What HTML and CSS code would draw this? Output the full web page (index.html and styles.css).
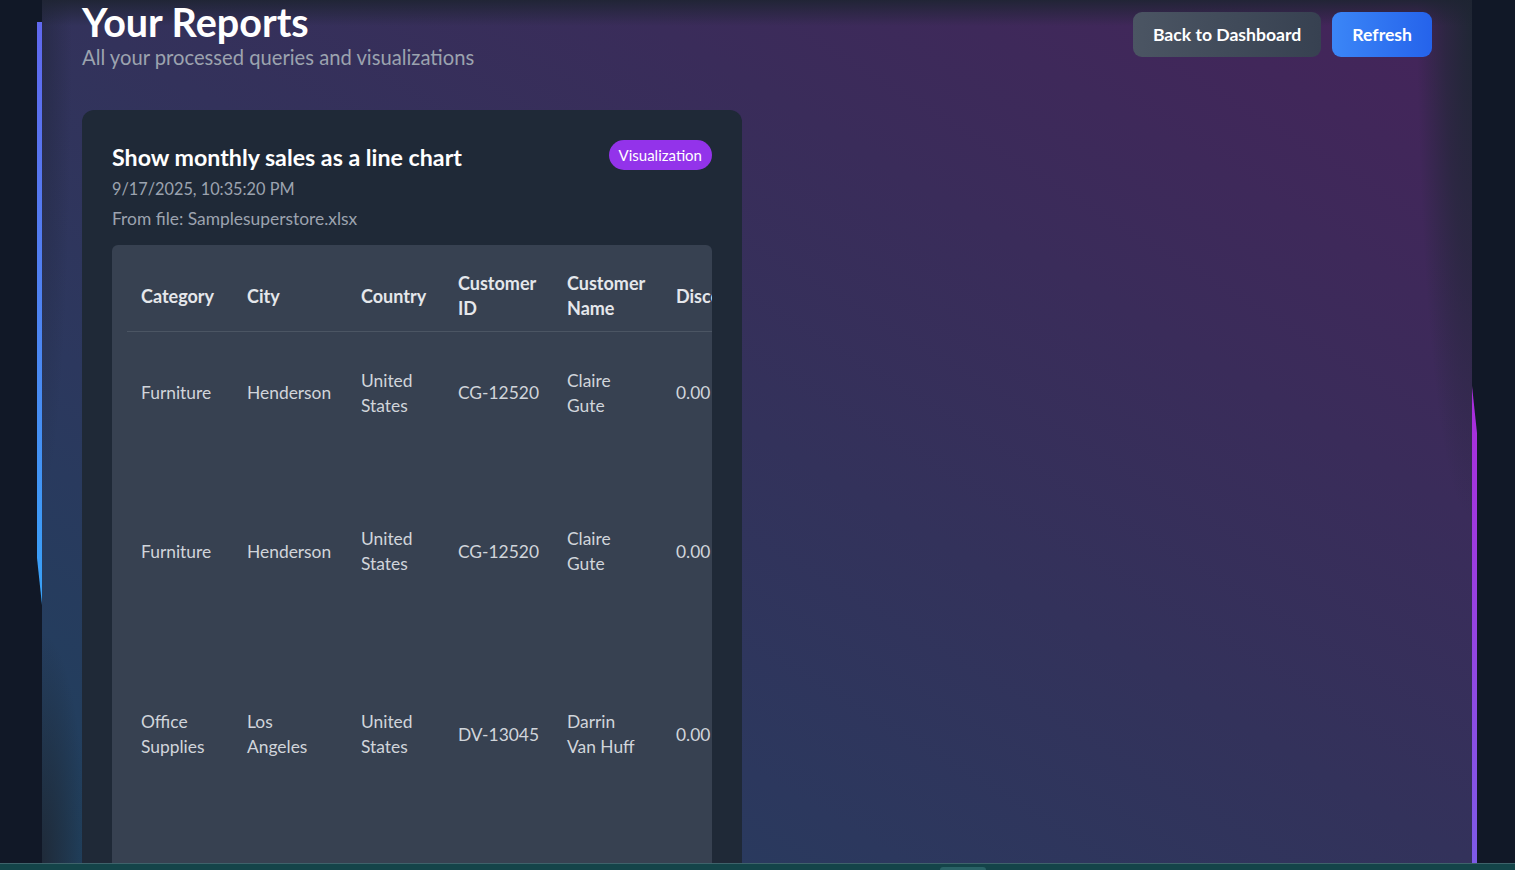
FILE: index.html
```html
<!DOCTYPE html>
<html lang="en">
<head>
<meta charset="utf-8">
<title>Your Reports</title>
<link rel="stylesheet" href="styles.css">
</head>
<body>
  <div class="stage">
    <div class="edge edge-left"></div>
    <div class="edge edge-right"></div>
    <main class="frame">
      <header class="page-head">
        <div class="page-titles">
          <h1 class="page-title">Your Reports</h1>
          <p class="page-sub">All your processed queries and visualizations</p>
        </div>
        <div class="page-actions">
          <button class="btn btn-gray">Back to Dashboard</button>
          <button class="btn btn-blue">Refresh</button>
        </div>
      </header>

      <section class="report-card">
        <div class="card-head">
          <div class="card-info">
            <h2 class="card-title">Show monthly sales as a line chart</h2>
            <p class="card-date">9/17/2025, 10:35:20 PM</p>
            <p class="card-file">From file: Samplesuperstore.xlsx</p>
          </div>
          <span class="badge">Visualization</span>
        </div>

        <div class="table-wrap">
          <table class="data-table">
            <thead>
              <tr>
                <th class="c1">Category</th>
                <th class="c2">City</th>
                <th class="c3">Country</th>
                <th class="c4">Customer<br>ID</th>
                <th class="c5">Customer<br>Name</th>
                <th class="c6">Discount</th>
              </tr>
            </thead>
            <tbody>
              <tr class="row-1">
                <td>Furniture</td>
                <td>Henderson</td>
                <td>United<br>States</td>
                <td class="nowrap">CG-12520</td>
                <td>Claire<br>Gute</td>
                <td>0.00</td>
              </tr>
              <tr class="row-2">
                <td>Furniture</td>
                <td>Henderson</td>
                <td>United<br>States</td>
                <td class="nowrap">CG-12520</td>
                <td>Claire<br>Gute</td>
                <td>0.00</td>
              </tr>
              <tr class="row-3">
                <td>Office<br>Supplies</td>
                <td>Los<br>Angeles</td>
                <td>United<br>States</td>
                <td class="nowrap">DV-13045</td>
                <td>Darrin<br>Van Huff</td>
                <td>0.00</td>
              </tr>
            </tbody>
          </table>
        </div>
      </section>
    </main>
  </div>
  <div class="taskbar"><span class="taskbar-pill"></span></div>
</body>
</html>
```
FILE: styles.css
```css
* { box-sizing: border-box; }

html, body {
  margin: 0;
  padding: 0;
  height: 870px;
  overflow: hidden;
  background: #111827;
  font-family: Lato, "Noto Sans", "Liberation Sans", sans-serif;
}

.stage {
  position: relative;
  width: 1430px;
  height: 863px;
  margin-left: 42px;
}

.frame {
  height: 863px;
  overflow: hidden;
  padding: 0 40px;
  background:
    linear-gradient(to bottom, rgba(30, 36, 50, 0.9) 0px, rgba(30, 36, 50, 0) 26px),
    radial-gradient(55px 520px at 100% 0%, rgba(31, 39, 52, 1) 0%, rgba(31, 39, 52, 0.6) 50%, rgba(31, 39, 52, 0) 100%),
    radial-gradient(45px 230px at 0% 100%, rgba(31, 41, 55, 0.95) 0%, rgba(31, 41, 55, 0.5) 50%, rgba(31, 41, 55, 0) 100%),
    radial-gradient(30px 500px at 0% 0%, rgba(30, 36, 55, 0.5), rgba(30, 36, 55, 0)),
    linear-gradient(to bottom left, #45245a 0%, #3a2c5a 30%, #33325b 50%, #2c385e 70%, #1f415e 100%);
}

.edge {
  position: absolute;
  width: 5px;
}

.edge-left {
  left: -5px;
  top: 22px;
  height: 583px;
  background: linear-gradient(to bottom, #6068ee 0%, #4c86f2 55%, #38a2f8 100%);
  clip-path: polygon(0 0, 100% 0, 100% 100%, 0 calc(100% - 47px));
}

.edge-right {
  right: -5px;
  top: 386px;
  height: 477px;
  background: linear-gradient(to bottom, #ab2bdc 0%, #9a3ee0 40%, #7d5ae7 100%);
  clip-path: polygon(0 0, 100% 47px, 100% 100%, 0 100%);
}

/* header */
.page-head {
  display: flex;
  justify-content: space-between;
  align-items: center;
}

.page-title {
  margin: 0;
  font-size: 39.5px;
  line-height: 44px;
  font-weight: 700;
  color: #ffffff;
}

.page-sub {
  margin: 1px 0 0;
  font-size: 20.2px;
  line-height: 24px;
  color: #9ca3af;
}

.page-actions {
  display: flex;
  gap: 11px;
}

.btn {
  height: 45px;
  padding: 0 20px;
  border: none;
  border-radius: 9px;
  font-family: Lato, "Noto Sans", sans-serif;
  font-size: 17.6px;
  font-weight: 700;
  color: #ffffff;
}

.btn-gray {
  background: linear-gradient(to right, #4b5563, #374151);
}

.btn-blue {
  background: linear-gradient(to right, #3b86f7, #2563eb);
}

/* card */
.report-card {
  margin-top: 41px;
  width: 660px;
  height: 900px;
  padding: 30px;
  background: #1f2937;
  border-radius: 12px;
}

.card-head {
  display: flex;
  justify-content: space-between;
  align-items: flex-start;
}

.card-title {
  margin: 0;
  font-size: 23.2px;
  line-height: 35px;
  font-weight: 700;
  color: #ffffff;
}

.card-date {
  margin: 2px 0 0;
  font-size: 16.3px;
  line-height: 24px;
  color: #9ca3af;
}

.card-file {
  margin: 6px 0 0;
  font-size: 17.4px;
  line-height: 24px;
  color: #9ca3af;
}

.badge {
  display: inline-block;
  height: 30px;
  padding: 0 10px;
  line-height: 30px;
  border-radius: 15px;
  background: #9333ea;
  color: #ffffff;
  font-size: 15px;
}

/* table */
.table-wrap {
  margin-top: 14px;
  height: 700px;
  padding: 17px 0 0 15px;
  background: #374151;
  border-radius: 6px;
  overflow: hidden;
}

.data-table {
  width: 655px;
  table-layout: fixed;
  border-collapse: collapse;
  font-size: 17.4px;
  line-height: 25px;
}

.data-table th {
  padding: 9px 10px 10px 14px;
  text-align: left;
  font-size: 18px;
  font-weight: 700;
  color: #e5e7eb;
  border-bottom: 1px solid #4b5563;
  vertical-align: middle;
  white-space: nowrap;
}

.data-table td {
  padding: 12px 10px 12px 14px;
  color: #d1d5db;
  vertical-align: middle;
  white-space: nowrap;
}

.data-table .c1 { width: 106px; }
.data-table .c2 { width: 114px; }
.data-table .c3 { width: 97px; }
.data-table .c4 { width: 109px; }
.data-table .c5 { width: 109px; }
.data-table .c6 { width: 120px; }

.row-1 { height: 122px; }
.row-2 { height: 195px; }
.row-3 { height: 171px; }

/* taskbar */
.taskbar {
  position: relative;
  height: 7px;
  background: #144449;
  border-top: 1px solid #3e636b;
}

.taskbar-pill {
  position: absolute;
  left: 940px;
  bottom: 0;
  width: 46px;
  height: 3px;
  border-radius: 3px 3px 0 0;
  background: #2a6266;
}
```
